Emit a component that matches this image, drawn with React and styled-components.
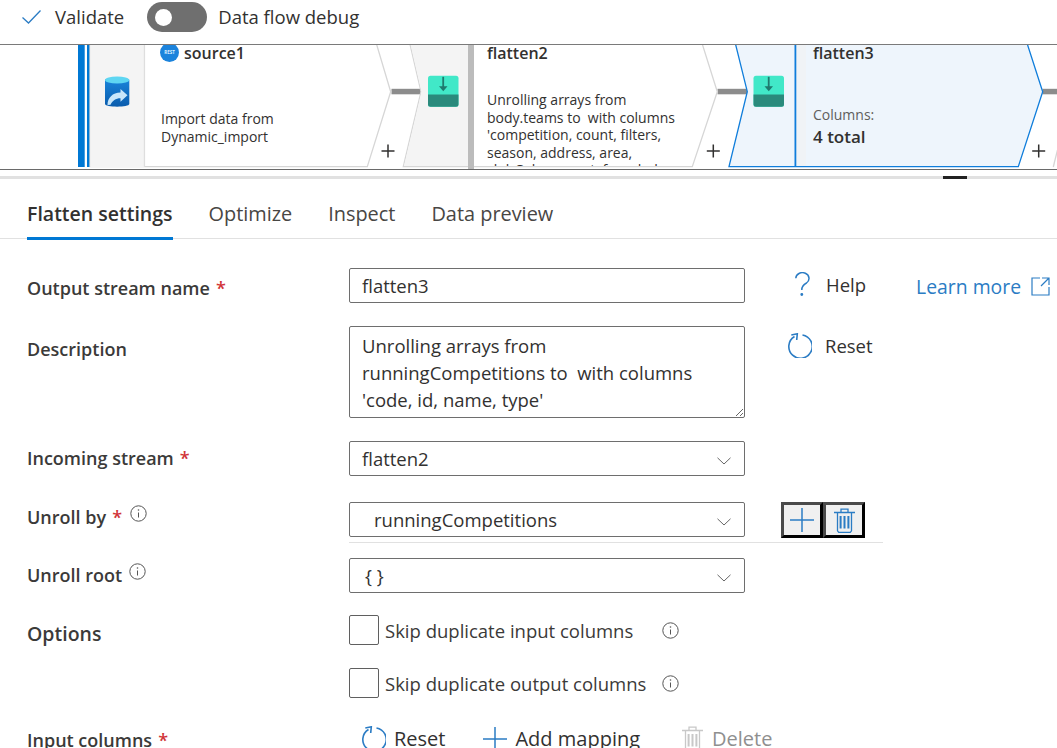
import React from "react";
import styled, { createGlobalStyle } from "styled-components";

const FONT = `"Open Sans", "Noto Sans", "Liberation Sans", sans-serif`;

const Global = createGlobalStyle`
  html, body { margin: 0; padding: 0; background: #fff; }
  body { width: 1057px; height: 748px; overflow: hidden; font-family: ${FONT}; color: #323130; }
  * { box-sizing: border-box; }
`;

const Page = styled.div`
  width: 1057px;
  height: 748px;
  overflow: hidden;
  display: flex;
  flex-direction: column;
`;

const Toolbar = styled.div`
  height: 44px;
  flex: none;
  display: flex;
  align-items: center;
  padding: 0 0 10px 22px;
  font-size: 18.5px;
`;
const ToolLabel = styled.span`
  margin-left: ${p => p.$ml}px;
  line-height: 24px;
`;
const Toggle = styled.div`
  width: 60px;
  height: 30px;
  border-radius: 15px;
  background: #6f6f6f;
  margin-left: 23px;
  display: flex;
  align-items: center;
  padding-left: 8px;
  flex: none;
`;
const Knob = styled.div`
  width: 17px;
  height: 17px;
  border-radius: 50%;
  background: #fff;
`;

const Canvas = styled.div`
  position: relative;
  height: 126px;
  flex: none;
  border-top: 1px solid #7a7a7a;
  border-bottom: 1px solid #6a6a6a;
  overflow: hidden;
  background: #fff;
`;
const CanvasArt = styled.svg`
  position: absolute;
  left: 0;
  top: -45px;
`;
const NodeText = styled.div`
  position: absolute;
  left: ${p => p.$x}px;
  top: ${p => p.$y - 45}px;
  width: ${p => p.$w || 230}px;
  font-size: ${p => p.$size || 14}px;
  line-height: ${p => p.$lh || 17.5}px;
  font-weight: ${p => p.$weight || 400};
  color: ${p => p.$color || "#323130"};
  white-space: pre;
  ${p => p.$h && `height: ${p.$h}px; overflow: hidden;`}
`;

const Splitter = styled.div`
  height: 3px;
  margin-top: 6px;
  flex: none;
  background: #e1e1e1;
  display: flex;
  justify-content: flex-end;
  padding-right: 90px;
`;
const Handle = styled.div`
  width: 24px;
  height: 3px;
  background: #222;
`;

const Tabs = styled.div`
  height: 60px;
  flex: none;
  display: flex;
  align-items: stretch;
  gap: 36px;
  padding-left: 27px;
  border-bottom: 1px solid #e1e1e1;
`;
const Tab = styled.div`
  display: flex;
  align-items: center;
  font-size: ${p => (p.$active ? 19.5 : 19.9)}px;
  padding-top: 11px;
  height: 61px;
  font-weight: ${p => (p.$active ? 600 : 400)};
  color: ${p => (p.$active ? "#323130" : "#484644")};
  border-bottom: 3px solid ${p => (p.$active ? "#0078d4" : "transparent")};
  margin-bottom: -1px;
`;

const Form = styled.div`
  display: flex;
  flex-direction: column;
`;
const Row = styled.div`
  display: grid;
  grid-template-columns: 322px 396px 1fr;
  padding-left: 27px;
  margin-top: ${p => p.$mt}px;
  align-items: start;
`;
const LabelCell = styled.div`
  display: flex;
  align-items: flex-start;
  font-size: ${p => p.$size || 18}px;
  font-weight: 600;
  line-height: 24px;
  padding-top: ${p => p.$pt ?? 8}px;
  color: #3b3a39;
  white-space: nowrap;
`;
const Star = styled.span`
  color: #d13438;
  margin-left: 6px;
`;
const InfoWrap = styled.span`
  display: inline-flex;
  margin-left: ${p => p.$ml ?? 6}px;
  margin-top: ${p => p.$mt ?? 0}px;
`;
const TextInput = styled.input`
  width: 396px;
  height: 35px;
  border: 1px solid #6e6e6e;
  border-radius: 2px;
  padding: 0 12px;
  font: 400 18.5px ${FONT};
  color: #323130;
  outline: none;
`;
const TextArea = styled.textarea`
  display: block;
  width: 396px;
  height: 92px;
  border: 1px solid #6e6e6e;
  border-radius: 2px;
  padding: 5px 12px 0;
  font: 400 18.5px/27px ${FONT};
  color: #323130;
  outline: none;
  resize: vertical;
  overflow: hidden;
`;
const Select = styled.div`
  width: 396px;
  height: 35px;
  border: 1px solid #6e6e6e;
  border-radius: 2px;
  padding: 0 13px 0 ${p => p.$indent || 12}px;
  display: flex;
  align-items: center;
  justify-content: space-between;
  font-size: 18.5px;
  & > svg { margin-top: 5px; }
`;
const Side = styled.div`
  display: flex;
  align-items: center;
  color: #323130;
  font-size: 18.5px;
  padding-top: ${p => p.$pt || 0}px;
  margin-left: ${p => p.$ml || 0}px;
`;
const HelpText = styled.span`
  margin-left: ${p => p.$ml}px;
`;
const HelpIcon = styled.svg`
  margin-left: 50px;
  flex: none;
`;
const LearnMore = styled.a`
  display: flex;
  align-items: center;
  gap: 10px;
  margin-left: 50px;
  margin-top: 5px;
  color: #2b7cc4;
  font-size: 19.4px;
  white-space: nowrap;
`;
const IconBtn = styled.button`
  width: 42px;
  height: 36px;
  border: 3px solid;
  border-color: #4a4a4a #000 #000 #4a4a4a;
  background: #f0f0f0;
  padding: 0;
  display: flex;
  align-items: center;
  justify-content: center;
`;
const Divider = styled.div`
  height: 1px;
  width: 534px;
  margin: 4px 0 0 349px;
  background: #e1e1e1;
  flex: none;
`;
const CheckCell = styled.div`
  display: flex;
  align-items: center;
  font-size: 18.5px;
  color: #3b3a39;
  white-space: nowrap;
`;
const Box = styled.div`
  width: 30px;
  height: 30px;
  border: 1px solid #5f5f5f;
  border-radius: 2px;
  margin-right: 6px;
  flex: none;
`;
const Actions = styled.div`
  display: flex;
  align-items: center;
  padding-left: 12px;
  font-size: 20px;
  white-space: nowrap;
`;
const ActionItem = styled.div`
  display: flex;
  align-items: center;
  gap: ${p => p.$gap}px;
  margin-right: ${p => p.$mr || 0}px;
  color: ${p => (p.$off ? "#8f8f8f" : "#323130")};
`;

const Info = () => (
  <svg width="17" height="17" viewBox="0 0 17 17" fill="none">
    <circle cx="8.5" cy="8.5" r="7.7" stroke="#555" />
    <path d="M8.5 7.5v5" stroke="#555" />
    <circle cx="8.5" cy="5" r=".8" fill="#555" />
  </svg>
);
const Chevron = () => (
  <svg width="14" height="8" viewBox="0 0 14 8" fill="none">
    <path d="M.5.8 7 7 13.500.8" stroke="#666" />
  </svg>
);
const ResetIcon = () => (
  <svg width="25" height="25" viewBox="-1 -1 25 25" fill="none" stroke="#2b7cc4" strokeWidth="1.600">
    <path d="M14.500 1A11.700 11.700 0 1 1 6.500 2.500" />
    <path d="M3.300 1 9.300-.2 8.700 6" />
  </svg>
);
const PlusIcon = ({ size = 24 }) => (
  <svg width={size} height={size} viewBox="0 0 24 24" stroke="#2b7cc4" strokeWidth="1.500" fill="none">
    <path d="M12 0v24M0 12h24" />
  </svg>
);
const Trash = ({ color = "#2b7cc4" }) => (
  <svg width="21" height="25" viewBox="0 0 21 25" fill="none" stroke={color} strokeWidth="1.300">
    <path d="M0 4.500h21M7 4V1.200h7V4M3.500 4.500v18.300l1.200 1.500h11.600l1.200-1.500V4.500" />
    <path d="M6.600 8v12.500M10.500 8v12.500M14.400 8v12.500" strokeWidth="2" />
  </svg>
);
const FlattenIcon = ({ x }) => (
  <g transform={`translate(${x} 75.800)`}>
    <rect width="30.500" height="31" rx="2.500" fill="#41e8c8" />
    <path d="M0 18.800h30.500V28.500a2.500 2.500 0 0 1-2.500 2.500H2.500A2.500 2.500 0 0 1 0 28.500z" fill="#2a8a7c" />
    <path d="M15.200 1v12" stroke="#1f7a6e" strokeWidth="1.800" />
    <path d="M11 10.500h8.500l-4.250 5z" fill="#1f7a6e" />
  </g>
);

const Art = () => (
  <CanvasArt width="1057" height="171" viewBox="0 0 1057 171">
    <defs>
      <linearGradient id="cyl" x1="0" y1="0" x2="0" y2="1">
        <stop offset="0" stopColor="#1a86dc" />
        <stop offset="1" stopColor="#0a5cad" />
      </linearGradient>
    </defs>
    <rect x="78" y="40" width="6.700" height="127" fill="#0078d4" />
    <rect x="87" y="40" width="3.300" height="127" fill="#0078d4" />
    {/* connectors */}
    <rect x="391.500" y="88.800" width="29.500" height="5.500" fill="#8c8c8c" />
    <rect x="717.500" y="88.800" width="29.500" height="5.500" fill="#8c8c8c" />
    <rect x="1042.500" y="88.800" width="14.500" height="5.500" fill="#8c8c8c" />
    {/* source1 */}
    <path d="M90 40H375.300L390.700 91.700 367.300 166.700H90Z" fill="#fff" stroke="#d6d6d6" strokeWidth="1.300" />
    <rect x="90.300" y="40" width="54" height="127" fill="#f4f4f4" />
    <rect x="143.800" y="40" width="1.300" height="127" fill="#dedede" />
    <path d="M105 80c0-3 24.300-3 24.300 0v24c0 3.500-24.300 3.500-24.300 0z" fill="url(#cyl)" />
    <ellipse cx="117.100" cy="80" rx="12.100" ry="3.600" fill="#5ed6f2" />
    <path d="M107.500 105c0-7 5-12.500 13-12.500V89l7 6.300-7 6.500v-3.500c-5 0-8 2.500-10 6.500z" fill="#c8e6fa" />
    <circle cx="169.500" cy="52.500" r="9.500" fill="#1b83dc" />
    <text x="169.500" y="54" textAnchor="middle" fontSize="4.500" fontWeight="700" fill="#dcefff" fontFamily="Open Sans, sans-serif">REST</text>
    {/* flatten2 */}
    <path d="M409 40H701L717.300 91.700 692.300 166.700H403.300L421 91.700Z" fill="#fff" stroke="#d6d6d6" strokeWidth="1.300" />
    <path d="M409.500 40H468V166H404L421.500 91.700Z" fill="#f4f4f4" />
    <rect x="468" y="40" width="6" height="129" fill="#bcbcbc" />
    <FlattenIcon x={428} />
    {/* flatten3 */}
    <path d="M734.500 40H1026L1042.700 91.700 1018.300 166.700H729L747.300 91.700Z" fill="#eef5fc" stroke="#0f7ddb" strokeWidth="1.300" />
    <rect x="796" y="44" width="10" height="122" fill="#f0f3f6" />
    <rect x="794.500" y="40" width="1.800" height="127" fill="#0f7ddb" />
    <FlattenIcon x={753.500} />
    <path d="M1058 148 1053.300 167" stroke="#d6d6d6" strokeWidth="1.300" fill="none" />
    {/* add buttons */}
    <path d="M388 144.500v13M381.500 151h13M713.300 144.500v13M706.800 151h13M1038.700 144.500v13M1032.200 151h13" stroke="#323130" strokeWidth="1.500" />
  </CanvasArt>
);

export default function App() {
  return (
    <Page>
      <Global />
      <Toolbar>
        <svg width="19" height="14" viewBox="0 0 19 14" fill="none">
          <path d="M.5 7.500 6.500 13 18.500.5" stroke="#2b7cc4" strokeWidth="1.300" />
        </svg>
        <ToolLabel $ml={14}>Validate</ToolLabel>
        <Toggle><Knob /></Toggle>
        <ToolLabel $ml={11}>Data flow debug</ToolLabel>
      </Toolbar>
      <Canvas>
        <Art />
        <NodeText $x={184} $y={42} $size={16} $lh={22} $weight={600}>source1</NodeText>
        <NodeText $x={161} $y={110}>{"Import data from\nDynamic_import"}</NodeText>
        <NodeText $x={487} $y={42} $size={16} $lh={22} $weight={600}>flatten2</NodeText>
        <NodeText $x={487} $y={91} $w={226} $h={75}>{"Unrolling arrays from\nbody.teams to  with columns\n'competition, count, filters,\nseason, address, area,\nclubColors, crest, founded,"}</NodeText>
        <NodeText $x={813} $y={106} $color="#605e5c">Columns:</NodeText>
        <NodeText $x={813} $y={42} $size={16} $lh={22} $weight={600}>flatten3</NodeText>
        <NodeText $x={813} $y={126} $size={17} $lh={22} $weight={600}>4 total</NodeText>
      </Canvas>
      <Splitter><Handle /></Splitter>
      <Tabs>
        <Tab $active>Flatten settings</Tab>
        <Tab>Optimize</Tab>
        <Tab>Inspect</Tab>
        <Tab>Data preview</Tab>
      </Tabs>
      <Form>
        <Row $mt={29}>
          <LabelCell>Output stream name<Star>*</Star></LabelCell>
          <TextInput defaultValue="flatten3" />
          <Side>
            <HelpIcon width="15" height="25" viewBox="0 0 15 25" fill="none" stroke="#2b7cc4" strokeWidth="1.500">
              <path d="M.8 6.300A6.600 5.800 0 1 1 11.500 11C8.500 12.500 6.800 14 6.800 18" />
              <circle cx="6.800" cy="22.500" r=".7" />
            </HelpIcon>
            <HelpText $ml={16}>Help</HelpText>
            <LearnMore>
              Learn more
              <svg width="19" height="19" viewBox="0 0 19 19" fill="none" stroke="#2b7cc4" strokeWidth="1.200">
                <path d="M9 1H1v17h17v-8M11 1h7v7M18 1l-8 8" />
              </svg>
            </LearnMore>
          </Side>
        </Row>
        <Row $mt={23}>
          <LabelCell $pt={11}>Description</LabelCell>
          <TextArea defaultValue={"Unrolling arrays from\nrunningCompetitions to  with columns\n'code, id, name, type'"} />
          <Side $pt={7} $ml={42}>
            <ResetIcon />
            <HelpText $ml={13}>Reset</HelpText>
          </Side>
        </Row>
        <Row $mt={23}>
          <LabelCell $pt={5}>Incoming stream<Star>*</Star></LabelCell>
          <Select>flatten2<Chevron /></Select>
        </Row>
        <Row $mt={26}>
          <LabelCell $pt={3}>Unroll by<Star>*</Star><InfoWrap $ml={8}><Info /></InfoWrap></LabelCell>
          <Select $indent={24}>runningCompetitions<Chevron /></Select>
          <Side $ml={36}>
            <IconBtn><PlusIcon /></IconBtn>
            <IconBtn><Trash /></IconBtn>
          </Side>
        </Row>
        <Divider />
        <Row $mt={15}>
          <LabelCell $pt={5}>Unroll root<InfoWrap $ml={7}><Info /></InfoWrap></LabelCell>
          <Select $indent={15}>{"{ }"}<Chevron /></Select>
        </Row>
        <Row $mt={22}>
          <LabelCell $pt={7} $size={19.5}>Options</LabelCell>
          <CheckCell>
            <Box />Skip duplicate input columns
            <InfoWrap $ml={29}><Info /></InfoWrap>
          </CheckCell>
        </Row>
        <Row $mt={22}>
          <span />
          <CheckCell>
            <Box />Skip duplicate output columns
            <InfoWrap $ml={16}><Info /></InfoWrap>
          </CheckCell>
        </Row>
        <Row $mt={27}>
          <LabelCell $pt={3}>Input columns<Star>*</Star></LabelCell>
          <Actions>
            <ActionItem $gap={8} $mr={38}><ResetIcon />Reset</ActionItem>
            <ActionItem $gap={8} $mr={42}><PlusIcon />Add mapping</ActionItem>
            <ActionItem $off $gap={9}><Trash color="#c8c8c8" />Delete</ActionItem>
          </Actions>
        </Row>
      </Form>
    </Page>
  );
}
